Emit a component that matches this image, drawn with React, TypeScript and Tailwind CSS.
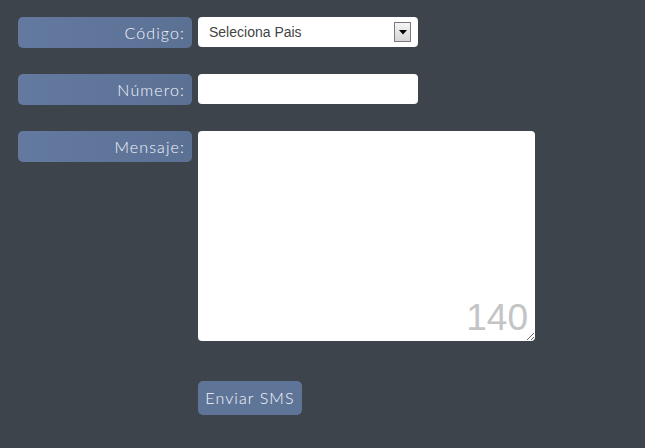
import React from "react";

const labelCls =
  "w-[174px] h-[31px] rounded-[5px] bg-gradient-to-r from-[#6379a0] to-[#5b7194] flex items-center justify-end pr-[7px] text-[16px] font-light tracking-[1.1px] text-[#f4f6fb] shrink-0";

export default function App() {
  return (
    <div
      className="w-[645px] h-[448px] bg-[#3d444b] pl-[18px] pt-[17px]"
      style={{ fontFamily: "Lato, 'Noto Sans', sans-serif" }}
    >
      <div className="flex items-start gap-[6px]">
        <div className={labelCls}>Código:</div>
        <div className="w-[220px] h-[30px] bg-white rounded-[4px] flex items-center justify-between pl-[11px] pr-[7px]">
          <span
            className="text-[14px] text-[#444]"
            style={{ fontFamily: "'Liberation Sans', Arial, sans-serif" }}
          >
            Seleciona Pais
          </span>
          <div className="w-[17px] h-[20px] border border-[#7a7a7a] bg-gradient-to-b from-[#f4f4f4] to-[#d6d6d6] flex items-center justify-center">
            <svg width="8" height="5" viewBox="0 0 8 5">
              <path d="M0 0 L8 0 L4 4.5 Z" fill="#000" />
            </svg>
          </div>
        </div>
      </div>

      <div className="flex items-start gap-[6px] mt-[26px]">
        <div className={labelCls}>Número:</div>
        <div className="w-[220px] h-[30px] bg-white rounded-[4px]" />
      </div>

      <div className="flex items-start gap-[6px] mt-[26px]">
        <div className={labelCls}>Mensaje:</div>
        <div className="relative w-[337px] h-[210px]">
          <textarea className="w-full h-full bg-white rounded-[4px] outline-none block resize" />
          <span
            className="absolute right-[7px] bottom-[5px] text-[37px] leading-none text-[#c4c4c4] pointer-events-none"
            style={{ fontFamily: "'Liberation Sans', Arial, sans-serif" }}
          >
            140
          </span>
        </div>
      </div>

      <div className="pl-[180px] mt-[40px]">
        <button className="w-[104px] h-[34px] rounded-[5px] bg-[#5f7597] text-[#f4f6fb] text-[16px] font-light tracking-[1.1px]">
          Enviar SMS
        </button>
      </div>
    </div>
  );
}
